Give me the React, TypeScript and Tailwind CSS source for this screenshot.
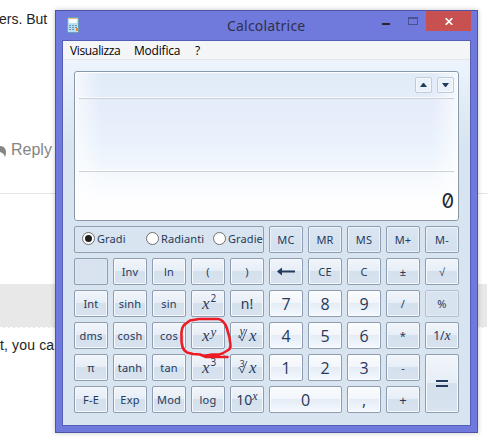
import React from "react";

type Kind = "fn" | "num" | "mem" | "off" | "dim";

const tones: Record<Kind, string> = {
  fn: "border-[#8e9db1] bg-[linear-gradient(#f2f6fb_0%,#e6edf6_49%,#d5e0ed_50%,#d8e3ef_100%)] shadow-[inset_0_0_0_1px_#f6f9fd]",
  num: "border-[#8e9db1] bg-[linear-gradient(#fafcfe_0%,#f2f5fa_49%,#e6ecf5_50%,#f3f9fe_100%)] shadow-[inset_0_0_0_1px_#fcfdff]",
  mem: "border-[#8e9db1] bg-[linear-gradient(#dce6f2_0%,#d3dfed_100%)] shadow-[inset_0_0_0_1px_#edf3fa]",
  off: "border-[#8e9db1] bg-[#d8e3ef] shadow-[inset_0_0_0_1px_#dfe9f3]",
  dim: "border-[#b4c0cf] bg-[#d8e3ef] shadow-[inset_0_0_0_1px_#e3ebf5]",
};

function Key({ kind = "fn", wide = "", children }: { kind?: Kind; wide?: string; children?: React.ReactNode }) {
  return (
    <button className={`flex items-center justify-center overflow-hidden whitespace-nowrap rounded-[2px] border ${tones[kind]} ${wide}`}>
      {children}
    </button>
  );
}

function T({ children, cls = "" }: { children: React.ReactNode; cls?: string }) {
  return <span className={`text-[11px] leading-[14px] tracking-[0.2px] ${cls}`}>{children}</span>;
}

function N({ children }: { children: React.ReactNode }) {
  return <span className="font-['Open_Sans',sans-serif] text-[16px] leading-[20px] text-[#283858]">{children}</span>;
}

const italic = "font-['Liberation_Serif',serif] italic";

function Power({ exp, serif = false }: { exp: string; serif?: boolean }) {
  return (
    <svg width="32" height="25" viewBox="0 0 32 25" className="shrink-0" fill="#2c3c5c">
      <text x="10" y="18" fontSize="17" className={italic}>x</text>
      <text x="18.500" y={serif ? 13 : 11} fontSize={serif ? 13 : 10} className={serif ? italic : ""}>{exp}</text>
    </svg>
  );
}

function Root({ deg, serif = false }: { deg: string; serif?: boolean }) {
  return (
    <svg width="32" height="25" viewBox="0 0 32 25" className="shrink-0" fill="#2c3c5c">
      <text x="8.500" y={serif ? 12 : 11.5} fontSize={serif ? 12 : 9} className={serif ? italic : ""}>{deg}</text>
      <path d="M7 13.500 8.500 12.500 11 18 16 6" fill="none" stroke="#465a79" strokeWidth="1" />
      <text x="18" y="18" fontSize="17" className={italic}>x</text>
    </svg>
  );
}

function Radio({ label, on = false, left }: { label: string; on?: boolean; left: string }) {
  return (
    <label className={`flex shrink-0 items-center ${left}`}>
      <span className="flex size-[13px] shrink-0 items-center justify-center rounded-full border border-[#707070] bg-white">
        {on && <span className="size-[7px] rounded-full bg-[#202020]" />}
      </span>
      <span className="ml-[2px] whitespace-nowrap text-[11px] leading-[14px] tracking-[0.1px]">{label}</span>
    </label>
  );
}

function Arrow({ down = false }: { down?: boolean }) {
  return (
    <span className="flex h-[16px] w-[17px] items-center justify-center rounded-[2px] border border-[#c1cbd8] bg-[#e9f1fa] shadow-[inset_0_0_0_1px_#f5f9fd]">
      <svg width="7" height="4" viewBox="0 0 7 4"><path d={down ? "M0 0h7L4 4H3z" : "M3 0h1l3 4H0z"} fill="#223a5e" /></svg>
    </span>
  );
}

function Backdrop() {
  return (
    <div className="flex h-[441px] flex-col font-['Liberation_Sans',sans-serif] text-[#242424]">
      <div className="h-[140px] pt-[11px] text-[14px] leading-[16px]">
        <span className="-ml-px">ers. But</span>
      </div>
      <div className="flex h-[53px] items-start text-[16px] leading-[20px] text-[#858585]">
        <svg width="7" height="12" viewBox="0 0 7 12" className="mt-[5px]"><path d="M0 1C4 1 6 4 6 7q0 3-1 5-1-4-5-5z" fill="#858585" /></svg>
        <span className="ml-[4px]">Reply</span>
      </div>
      <div className="h-[91px] border-t border-[#e4e4e4]" />
      <div className="h-[44px] border-b border-dashed border-white bg-[#e8e8e8]" />
      <div className="pt-[9px] text-[14px] leading-[16px] tracking-[0.15px]">t, you ca</div>
    </div>
  );
}

export default function App() {
  return (
    <div className="relative h-[441px] w-[487px] overflow-hidden bg-white">
      <Backdrop />
      <div className="absolute left-[55px] top-[10px] flex h-[423px] w-[423px] flex-col border border-[#4e54a5] bg-[#6f7adc] px-[6px] pb-[6px] font-['Noto_Sans',sans-serif] shadow-[0_0_5px_rgba(0,0,0,0.22)]">
        <header className="flex h-[29px] shrink-0 items-start">
          <svg width="12" height="16" viewBox="0 0 12 16" className="ml-[5px] mt-[6px]">
            <rect x=".5" y=".5" width="11" height="15" rx="1" fill="#b9def2" stroke="#6b9fbd" />
            <path d="M2 2h8v4H2z" fill="#f7fcff" /><path d="M1 1h10v1H1z" fill="#e7b984" />
            <path d="M2 8h2v1H2zm3 0h2v1H5zm3 0h2v1H8zM2 10h2v1H2zm3 0h2v1H5zm3 0h2v1H8zM2 12h2v1H2zm3 0h2v1H5z" fill="#6798b9" />
            <path d="M9 11h2v3H9z" fill="#f18b22" />
          </svg>
          <h1 className="ml-[148px] mt-[5px] w-[78px] whitespace-nowrap text-[14px] leading-[20px] tracking-[0.2px] text-[#303049]">Calcolatrice</h1>
          <span className="ml-[77px] mt-[12px] h-[2px] w-[8px] bg-[#26262c]" />
          <span className="ml-[18px] mt-[6px] h-[8px] w-[10px] border border-t-2 border-[#4b5095]" />
          <span className="ml-[8px] flex h-[20px] w-[45px] items-center justify-center bg-[#c75050]">
            <svg width="8" height="7" viewBox="0 0 8 7"><path d="m.7.2 6.6 6.6m0-6.6L.7 6.8" stroke="white" strokeWidth="1.7" /></svg>
          </span>
        </header>
        <main className="flex h-[386px] w-[409px] flex-col border border-[#555eb6] bg-[linear-gradient(#f1f6fd_0px,#eaf2fb_30px,#d8e4ef_105px)]">
          <nav className="flex h-[19px] shrink-0 border-b border-[#e5e6e2] bg-[#f4f5f7] font-['Open_Sans',sans-serif] text-[12px] leading-[19px] text-black">
            <span className="ml-[7px] w-[64px] tracking-[-0.35px]">Visualizza</span>
            <span className="w-[61px] tracking-[-0.2px]">Modifica</span>
            <span>?</span>
          </nav>
          <section className="ml-[11px] mt-[11px] h-[150px] w-[385px] shrink-0 rounded-[3px] border border-[#8798aa] bg-[linear-gradient(#e0ebf8_0px,#e5ecfa_35px,#e9f2fc_70px,#f4f8fd_100px,#fefeff_130px)] shadow-[inset_0_0_0_1px_white]">
            <div className="h-full rounded-[3px] bg-[linear-gradient(90deg,#ffffffb0_0%,#ffffff00_7%,#ffffff00_93%,#ffffffb0_100%)] p-[1px]">
              <div className="mx-[3px] flex h-[26px] items-start justify-end gap-[5px] border-b border-[#cbd0d6] pt-[4px] shadow-[inset_0_-1px_0_#fafcff]">
                <Arrow /><Arrow down />
              </div>
              <div className="mx-[3px] h-[73px] border-b border-[#cbd0d6] shadow-[inset_0_-1px_0_white]" />
              <div className="mr-[3px] mt-[16px] text-right font-['Inter',sans-serif] text-[20px] leading-[26px] slashed-zero text-[#242832]">0</div>
            </div>
          </section>
          <section className="ml-[11px] mt-[5px] grid w-[385px] grid-cols-[repeat(10,34px)] grid-rows-[repeat(6,27px)] gap-[5px] text-[#263a5b]">
            <div className="col-span-5 flex items-center rounded-[2px] border border-[#8e9db1] pb-[2px] shadow-[inset_0_0_0_1px_#dfe8f2]">
              <Radio label="Gradi" on left="ml-[7px] w-[64px]" />
              <Radio label="Radianti" left="w-[67px]" />
              <Radio label="Gradie" left="w-[49px]" />
            </div>
            {["MC", "MR", "MS", "M+", "M-"].map((s) => <Key key={s} kind="mem"><T>{s}</T></Key>)}

            <Key kind="off" /><Key><T>Inv</T></Key><Key><T>ln</T></Key><Key><T>(</T></Key><Key><T>)</T></Key>
            <Key><svg width="18" height="9" viewBox="0 0 18 9"><path d="M1 4.500h17" stroke="#223a5e" strokeWidth="2" /><path d="m0 4.500 5-4v8z" fill="#223a5e" /></svg></Key>
            <Key><T>CE</T></Key><Key><T>C</T></Key><Key><T>±</T></Key><Key><T>√</T></Key>

            <Key><T>Int</T></Key><Key><T>sinh</T></Key><Key><T>sin</T></Key><Key><Power exp="2" /></Key><Key><span className="text-[14px] leading-[18px]">n!</span></Key>
            <Key kind="num"><N>7</N></Key><Key kind="num"><N>8</N></Key><Key kind="num"><N>9</N></Key><Key><T>/</T></Key><Key kind="dim"><T>%</T></Key>

            <Key><T>dms</T></Key><Key><T>cosh</T></Key><Key><T>cos</T></Key><Key><Power exp="y" serif /></Key><Key><Root deg="y" serif /></Key>
            <Key kind="num"><N>4</N></Key><Key kind="num"><N>5</N></Key><Key kind="num"><N>6</N></Key><Key><T>*</T></Key>
            <Key><span className="text-[12px] leading-[16px]">1/<span className={`${italic} text-[14px]`}>x</span></span></Key>

            <Key><T>π</T></Key><Key><T>tanh</T></Key><Key><T>tan</T></Key><Key><Power exp="3" /></Key><Key><Root deg="3" /></Key>
            <Key kind="num"><N>1</N></Key><Key kind="num"><N>2</N></Key><Key kind="num"><N>3</N></Key><Key><T>-</T></Key>
            <Key wide="row-span-2"><svg width="12" height="7" viewBox="0 0 12 7"><path d="M0 0h12v2H0zm0 5h12v2H0z" fill="#223a5e" /></svg></Key>

            <Key><T>F-E</T></Key><Key><T>Exp</T></Key><Key><T>Mod</T></Key><Key><T>log</T></Key>
            <Key><span className="flex items-start text-[14px] leading-[20px]">10<span className={`${italic} text-[12px] leading-[12px]`}>x</span></span></Key>
            <Key kind="num" wide="col-span-2"><N>0</N></Key><Key kind="num"><N>,</N></Key><Key><T cls="text-[13px]">+</T></Key>
          </section>
        </main>
      </div>
      <svg className="absolute left-[176px] top-[314px]" width="58" height="50" viewBox="0 0 58 50">
        <path d="M14 6.500 8 11Q5 15 5.500 22C5 30 6 36 11 38.500L17 40l7 .5 6 2.500h21.500M36 40.500h7c4-1 7-3 10-5 2-2 2-4 1-8 0-5-2-8-3-13C49 8 45 5 42 5H23L14 6.500M28 42l8-1.500" fill="none" stroke="#ed1c24" strokeWidth="2.6" strokeLinecap="round" strokeLinejoin="round" />
      </svg>
    </div>
  );
}
